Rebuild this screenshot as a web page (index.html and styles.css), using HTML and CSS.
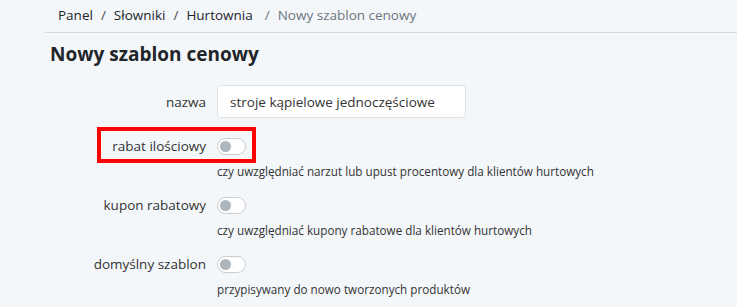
FILE: index.html
```html
<!DOCTYPE html>
<html lang="pl">
<head>
<meta charset="utf-8">
<link rel="stylesheet" href="styles.css">
</head>
<body>
<div class="page">
  <nav class="crumbs">
    <a class="crumb">Panel</a><span class="sep">/</span>
    <a class="crumb">Słowniki</a><span class="sep">/</span>
    <a class="crumb">Hurtownia</a><span class="sep last">/</span>
    <span class="crumb current">Nowy szablon cenowy</span>
  </nav>
  <h1 class="title">Nowy szablon cenowy</h1>
  <form class="form">
    <div class="row row-input">
      <label class="label">nazwa</label>
      <div class="control"><input class="text" type="text" value="stroje kąpielowe jednoczęściowe"></div>
    </div>
    <div class="row row-switch">
      <label class="label">rabat ilościowy</label>
      <div class="control"><span class="switch"><span class="knob"></span></span></div>
      <div class="highlight"></div>
    </div>
    <div class="row help-row"><span></span><div class="help">czy uwzględniać narzut lub upust procentowy dla klientów hurtowych</div></div>
    <div class="row row-switch">
      <label class="label">kupon rabatowy</label>
      <div class="control"><span class="switch"><span class="knob"></span></span></div>
    </div>
    <div class="row help-row"><span></span><div class="help">czy uwzględniać kupony rabatowe dla klientów hurtowych</div></div>
    <div class="row row-switch">
      <label class="label">domyślny szablon</label>
      <div class="control"><span class="switch"><span class="knob"></span></span></div>
    </div>
    <div class="row help-row"><span></span><div class="help">przypisywany do nowo tworzonych produktów</div></div>
  </form>
</div>
</body>
</html>
```

FILE: styles.css
```css
html, body {
  margin: 0;
  padding: 0;
  background: #f4f7fa;
  font-family: "Open Sans", "Lato", sans-serif;
  color: #212529;
}
.page {
  padding-left: 45px;
  height: 307px;
  overflow: hidden;
}
.crumbs {
  box-sizing: border-box;
  height: 33px;
  border-bottom: 1px solid #d6d8da;
  padding-left: 13px;
  padding-bottom: 1px;
  display: flex;
  align-items: center;
  font-size: 13.5px;
  line-height: 1;
}
.crumb { color: #212529; }
.crumb.current { color: #6c757d; }
.sep { color: #4a4a4a; margin: 0 8px; }
.sep.last { margin: 0 8px 0 12px; color: #6c757d; }
.title {
  margin: 9px 0 0 5px;
  font-size: 19px;
  font-weight: 700;
  line-height: 24px;
  color: #212529;
}
.form {
  margin: 0;
}
.row {
  display: grid;
  grid-template-columns: 161px 1fr;
  column-gap: 11px;
  align-items: center;
  position: relative;
}
.label {
  text-align: right;
  font-size: 13.5px;
  color: #333;
}
.row-input { height: 33px; margin-top: 19px; }
.text {
  display: block;
  box-sizing: border-box;
  width: 249px;
  height: 33px;
  border: 1px solid #dde1e5;
  border-radius: 4px;
  background: #fff;
  padding: 0 12px;
  font: inherit;
  font-size: 13.5px;
  color: #333;
  outline: none;
}
.row-switch { height: 18px; margin-top: 19px; }
.row-switch ~ .row-switch { margin-top: 18px; }
.switch {
  display: block;
  box-sizing: border-box;
  width: 29px;
  height: 17px;
  border: 1px solid #c8ccd0;
  border-radius: 9px;
  background: #fff;
  position: relative;
}
.knob {
  position: absolute;
  left: 2px;
  top: 2px;
  width: 11px;
  height: 11px;
  border-radius: 50%;
  background: #adb5bd;
}
.highlight {
  position: absolute;
  left: 52px;
  top: -10px;
  width: 159px;
  height: 36px;
  box-sizing: border-box;
  border: 4px solid #ff0000;
  pointer-events: none;
}
.help-row { margin-top: 9px; height: 14px; }
.help {
  font-size: 11.7px;
  color: #333;
  line-height: 14px;
  white-space: nowrap;
}
```
